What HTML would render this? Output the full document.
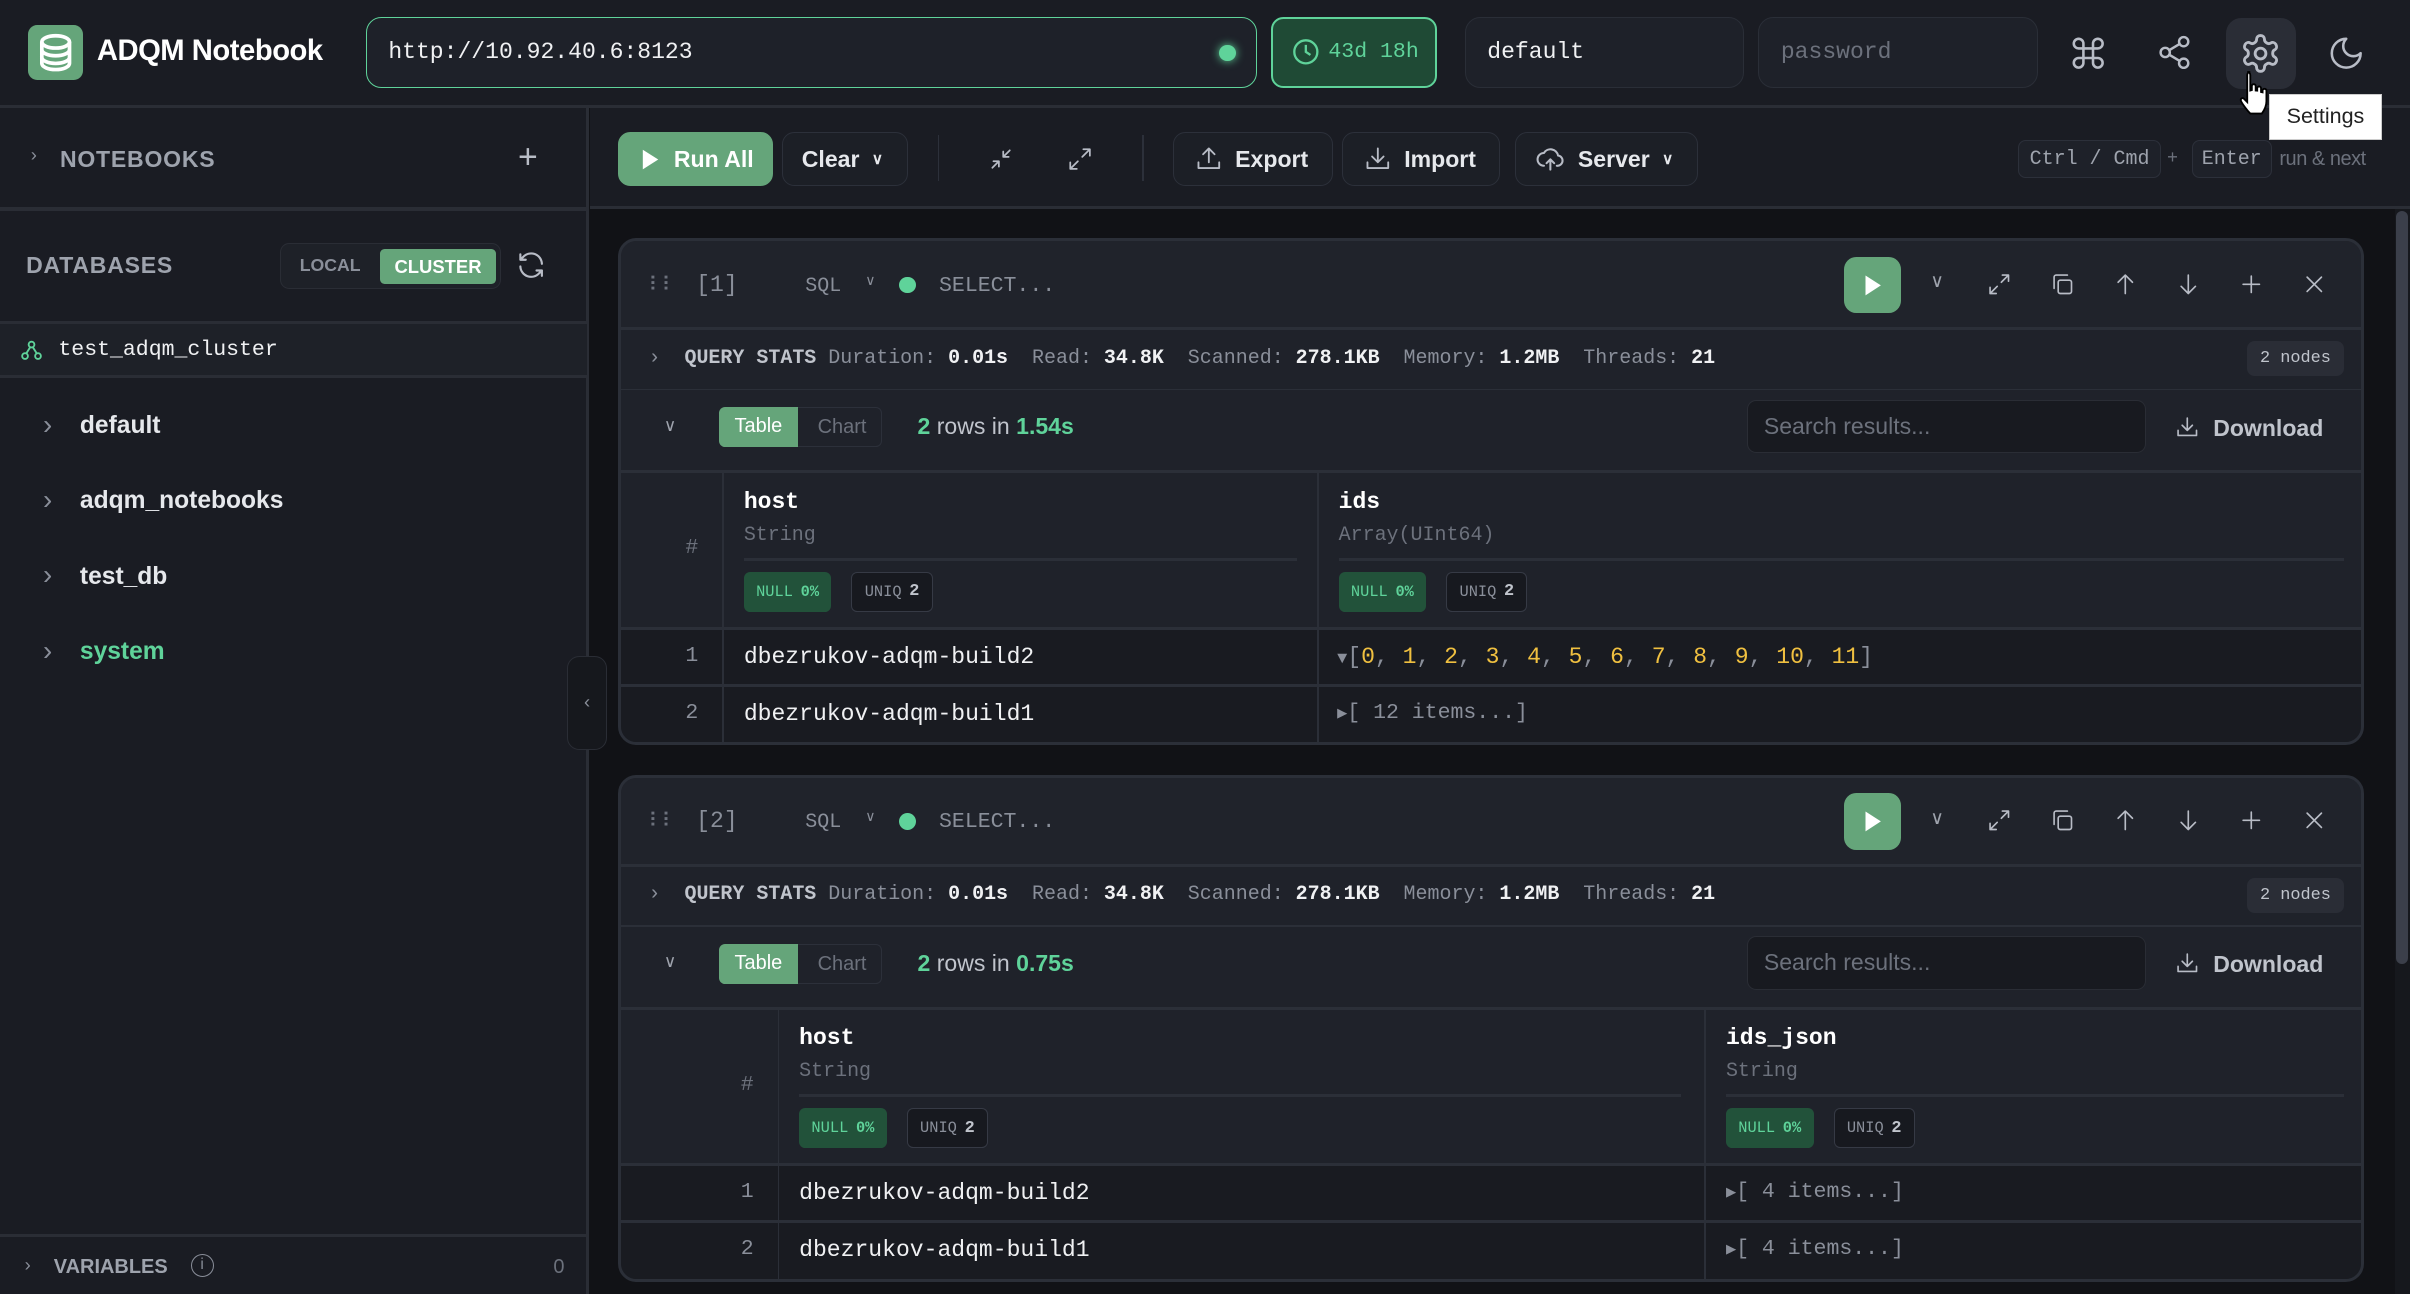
<!DOCTYPE html>
<html><head><meta charset="utf-8">
<style>
*{box-sizing:border-box;margin:0;padding:0}
html,body{width:2410px;height:1294px;overflow:hidden;background:#111216}
#r{zoom:1.537;width:1568px;height:842px;position:relative;font-family:"Liberation Sans",sans-serif;color:#e6e8ec;background:#111216}
.a{position:absolute}
.mono{font-family:"Liberation Mono",monospace}
.btn{position:absolute;height:35px;border:1px solid #2c303a;border-radius:8px;background:#1c1f26;display:flex;align-items:center;gap:8px;padding:0 12px;font-size:15px;font-weight:bold;color:#e6e8ec;white-space:nowrap}
.inp{position:absolute;height:46px;border:1px solid #2a2e37;border-radius:10px;background:#1e2129;font-family:"Liberation Mono",monospace;font-size:15px;display:flex;align-items:center;padding-left:14px}
svg{display:block}
.ic{stroke:#b8bcc6;fill:none;stroke-width:1.6;stroke-linecap:round;stroke-linejoin:round}
.cell{position:absolute;left:402px;width:1136px;background:#1f222a;border:2px solid #2b2f38;border-radius:12px;overflow:hidden}
.hl{position:absolute;left:0;right:0;height:1px;background:#2b2f38}
.vl{position:absolute;width:1px;background:#2b2f38}
.pill{position:absolute;height:26px;border-radius:4px;font-family:"Liberation Mono",monospace;font-size:10px;display:flex;align-items:center;padding:0 8px;gap:5px}
.null{background:#22523a;color:#5fd39a}
.uniq{border:1px solid #363a45;background:#17191f;color:#8a8f9a}
.stats{font-family:"Liberation Mono",monospace;font-size:13px;color:#8a8f9a;white-space:nowrap}
.stats b{color:#f0f1f3}
</style></head><body><div id="r">

<div class="a" style="left:0;top:0;width:1568px;height:70px;background:#1a1c23;border-bottom:2px solid #2a2d35"></div>
<div class="a" style="left:18px;top:16px;width:36px;height:36px;border-radius:6px;background:#65a57a">
<svg width="36" height="36" viewBox="0 0 36 36"><g fill="none" stroke="#fff" stroke-width="2.4"><ellipse cx="18" cy="11" rx="9" ry="4"/><path d="M9 11v14c0 2.2 4 4 9 4s9-1.8 9-4V11M9 16c0 2.2 4 4 9 4s9-1.8 9-4M9 21c0 2.2 4 4 9 4s9-1.8 9-4"/></g></svg></div>
<div class="a" style="left:63px;top:23px;font-size:19px;font-weight:bold;color:#fff;letter-spacing:-0.3px">ADQM Notebook</div>
<div class="inp" style="left:238px;top:11px;width:580px;border-color:#5fd39a;color:#f0f1f3">http://10.92.40.6:8123</div>
<div class="a" style="left:793px;top:29px;width:11px;height:11px;border-radius:50%;background:#5fd39a;box-shadow:0 0 6px #5fd39a"></div>
<div class="a" style="left:827px;top:11px;width:108px;height:46px;border:1.5px solid #5fd39a;border-radius:8px;background:#1f4a35;display:flex;align-items:center;gap:6px;padding-left:12px;font-family:'Liberation Mono',monospace;font-size:14px;color:#5fd39a">
<svg width="18" height="18" viewBox="0 0 18 18"><circle cx="9" cy="9" r="7.5" fill="none" stroke="#5fd39a" stroke-width="1.5"/><path d="M9 4.5V9l3 2" fill="none" stroke="#5fd39a" stroke-width="1.5"/></svg>43d 18h</div>
<div class="inp" style="left:953px;top:11px;width:182px;color:#f0f1f3;background:#1e2129">default</div>
<div class="inp" style="left:1144px;top:11px;width:182px;color:#6c717c">password</div>
<svg class="a" style="left:1346px;top:22px" width="25" height="25" viewBox="0 0 24 24"><path class="ic" stroke-width="1.8" d="M15 6v12a3 3 0 1 0 3-3H6a3 3 0 1 0 3 3V6a3 3 0 1 0-3 3h12a3 3 0 1 0-3-3"/></svg>
<svg class="a" style="left:1403px;top:22px" width="24" height="24" viewBox="0 0 24 24"><g class="ic" stroke-width="1.8"><circle cx="18" cy="5" r="3"/><circle cx="6" cy="12" r="3"/><circle cx="18" cy="19" r="3"/><path d="M8.6 13.5l6.8 4M15.4 6.5l-6.8 4"/></g></svg>
<div class="a" style="left:1448px;top:12px;width:46px;height:46px;border-radius:10px;background:#2a2d36"></div>
<svg class="a" style="left:1457px;top:21px" width="28" height="28" viewBox="0 0 24 24"><g class="ic" stroke="#e6e8ec" stroke-width="1.7"><path d="M12.2 2h-.4a2 2 0 0 0-2 2v.2a2 2 0 0 1-1 1.7l-.4.3a2 2 0 0 1-2 0l-.2-.1a2 2 0 0 0-2.7.7l-.2.4a2 2 0 0 0 .7 2.7l.2.1a2 2 0 0 1 1 1.7v.5a2 2 0 0 1-1 1.7l-.2.1a2 2 0 0 0-.7 2.7l.2.4a2 2 0 0 0 2.7.7l.2-.1a2 2 0 0 1 2 0l.4.3a2 2 0 0 1 1 1.7v.2a2 2 0 0 0 2 2h.4a2 2 0 0 0 2-2v-.2a2 2 0 0 1 1-1.7l.4-.3a2 2 0 0 1 2 0l.2.1a2 2 0 0 0 2.7-.7l.2-.4a2 2 0 0 0-.7-2.7l-.2-.1a2 2 0 0 1-1-1.7v-.5a2 2 0 0 1 1-1.7l.2-.1a2 2 0 0 0 .7-2.7l-.2-.4a2 2 0 0 0-2.7-.7l-.2.1a2 2 0 0 1-2 0l-.4-.3a2 2 0 0 1-1-1.7V4a2 2 0 0 0-2-2z"/><circle cx="12" cy="12" r="3"/></g></svg>
<svg class="a" style="left:1514px;top:22px" width="25" height="25" viewBox="0 0 24 24"><path class="ic" stroke-width="1.8" d="M12 3a6 6 0 0 0 9 9 9 9 0 1 1-9-9z"/></svg>

<div class="a" style="left:0;top:70px;width:383px;height:772px;background:#1a1c23;border-right:2px solid #2a2d35"></div>
<div class="a" style="left:0;top:135px;width:382px;height:2px;background:#2a2d35"></div>
<div class="a" style="left:20px;top:94px;font-size:12px;color:#8a8f9a">&#x203A;</div>
<div class="a" style="left:39px;top:95px;font-size:15px;font-weight:bold;color:#9ea3ad;letter-spacing:.5px">NOTEBOOKS</div>
<div class="a" style="left:337px;top:90px;font-size:22px;color:#b8bcc6">+</div>
<div class="a" style="left:17px;top:164px;font-size:15px;font-weight:bold;color:#9ea3ad;letter-spacing:.5px">DATABASES</div>
<div class="a" style="left:182px;top:158px;width:144px;height:30px;border:1px solid #2a2d35;border-radius:6px;background:#1e2128"></div>
<div class="a" style="left:195px;top:166px;font-size:11.5px;font-weight:bold;color:#8a8f9a">LOCAL</div>
<div class="a" style="left:247px;top:162px;width:76px;height:23px;background:#65a57a;border-radius:3px;font-size:12px;font-weight:bold;color:#fff;text-align:center;line-height:23px">CLUSTER</div>
<svg class="a" style="left:335px;top:162px" width="21" height="21" viewBox="0 0 24 24"><path class="ic" stroke-width="1.8" d="M20 11a8 8 0 0 0-14-5l-2 2M4 4v4h4M4 13a8 8 0 0 0 14 5l2-2M20 20v-4h-4"/></svg>
<div class="a" style="left:0;top:209px;width:382px;height:37px;background:#1e2128;border-top:2px solid #2a2d35;border-bottom:2px solid #2a2d35"></div>
<svg class="a" style="left:13px;top:220px" width="15" height="16" viewBox="0 0 16 16"><g fill="none" stroke="#5fd39a" stroke-width="1.3"><circle cx="8" cy="4" r="2"/><circle cx="3.5" cy="12" r="2"/><circle cx="12.5" cy="12" r="2"/><path d="M7 6l-2.5 4M9 6l2.5 4"/></g></svg>
<div class="a mono" style="left:38px;top:220px;font-size:14px;color:#f0f1f3">test_adqm_cluster</div>
<div class="a" style="left:28px;top:266px;font-size:18px;color:#8a8f9a">&#x203A;</div><div class="a" style="left:52px;top:268px;font-size:16px;font-weight:bold;color:#e6e8ec">default</div>
<div class="a" style="left:28px;top:315px;font-size:18px;color:#8a8f9a">&#x203A;</div><div class="a" style="left:52px;top:317px;font-size:16px;font-weight:bold;color:#e6e8ec">adqm_notebooks</div>
<div class="a" style="left:28px;top:364px;font-size:18px;color:#8a8f9a">&#x203A;</div><div class="a" style="left:52px;top:366px;font-size:16px;font-weight:bold;color:#e6e8ec">test_db</div>
<div class="a" style="left:28px;top:413px;font-size:18px;color:#8a8f9a">&#x203A;</div><div class="a" style="left:52px;top:415px;font-size:16px;font-weight:bold;color:#5fd39a">system</div>
<div class="a" style="left:0;top:803px;width:382px;height:2px;background:#2a2d35"></div>
<div class="a" style="left:16px;top:816px;font-size:12px;color:#8a8f9a">&#x203A;</div>
<div class="a" style="left:35px;top:817px;font-size:13px;font-weight:bold;color:#9ea3ad">VARIABLES</div>
<div class="a" style="left:124px;top:816px;width:15px;height:15px;border:1.3px solid #8a8f9a;border-radius:50%;font-size:10px;color:#8a8f9a;text-align:center;line-height:13px">i</div>
<div class="a" style="left:360px;top:817px;font-size:13px;color:#6c717c">0</div>
<div class="a" style="left:369px;top:427px;width:26px;height:61px;border:1px solid #2a2d35;border-radius:8px;background:#16181d;color:#8a8f9a;font-size:12px;text-align:center;line-height:58px">&#x2039;</div>

<div class="a" style="left:384px;top:70px;width:1184px;height:66px;background:#1a1c23;border-bottom:2px solid #2a2d35"></div>
<div class="btn" style="left:402px;top:86px;width:101px;background:#65a57a;border-color:#65a57a;color:#fff;padding-left:14px;gap:9px"><svg width="13" height="15" viewBox="0 0 14 16"><path d="M2 1l11 7-11 7z" fill="#fff"/></svg>Run All</div>
<div class="btn" style="left:509px;top:86px;width:82px">Clear <span style="font-size:10px">&#x2228;</span></div>
<div class="a" style="left:610px;top:88px;width:1px;height:30px;background:#2c303a"></div>
<svg class="a" style="left:643px;top:95px" width="17" height="17" viewBox="0 0 24 24"><path class="ic" d="M4 20l6-6M10 19v-5H5M20 4l-6 6M14 5v5h5"/></svg>
<svg class="a" style="left:694px;top:95px" width="17" height="17" viewBox="0 0 24 24"><path class="ic" d="M14 10l7-7M15 3h6v6M10 14l-7 7M3 15v6h6"/></svg>
<div class="a" style="left:743px;top:88px;width:1px;height:30px;background:#2c303a"></div>
<div class="btn" style="left:763px;top:86px;width:104px;padding-left:14px"><svg width="18" height="18" viewBox="0 0 24 24"><path class="ic" stroke="#e6e8ec" stroke-width="2" d="M12 15V3M7 8l5-5 5 5M3 15v5h18v-5"/></svg>Export</div>
<div class="btn" style="left:873px;top:86px;width:103px;padding-left:14px"><svg width="18" height="18" viewBox="0 0 24 24"><path class="ic" stroke="#e6e8ec" stroke-width="2" d="M12 3v12M7 10l5 5 5-5M3 15v5h18v-5"/></svg>Import</div>
<div class="btn" style="left:986px;top:86px;width:119px;padding-left:12px"><svg width="20" height="20" viewBox="0 0 24 24"><path class="ic" stroke="#8a8f9a" d="M7 17a5 5 0 0 1 0-10 6 6 0 0 1 11 2 4 4 0 0 1-1 8M12 20v-8M9 15l3-3 3 3"/></svg>Server <span style="font-size:10px">&#x2228;</span></div>
<div class="a mono" style="left:1313px;top:91px;width:93px;height:25px;border:1px solid #2c303a;border-radius:5px;background:#1e2129;font-size:13px;color:#9ea3ad;text-align:center;line-height:23px">Ctrl / Cmd</div>
<div class="a" style="left:1410px;top:95px;font-size:12px;color:#6c717c">+</div>
<div class="a mono" style="left:1426px;top:91px;width:52px;height:25px;border:1px solid #2c303a;border-radius:5px;background:#1e2129;font-size:13px;color:#9ea3ad;text-align:center;line-height:23px">Enter</div>
<div class="a" style="left:1483px;top:96px;font-size:13px;color:#6c717c;white-space:nowrap;letter-spacing:-0.3px">run &amp; next</div>

<div class="a" style="left:1476px;top:61px;width:74px;height:30px;background:#fff;border:1px solid #ccc;font-size:14px;color:#222;text-align:center;line-height:28px">Settings</div>
<svg class="a" style="left:1456px;top:45px" width="24" height="32" viewBox="0 0 24 32"><path d="M6 2c1.5 0 2 1 2 2v10l1-.3V11c0-1.5 2.5-1.5 2.5 0v3l1 .1V12.5c0-1.5 2.5-1.5 2.5 0v2.5l1 .2V14c0-1.5 2.5-1.5 2.5 0v7c0 3-1.5 6-3 8H8c-2-2-5-6-6-8-.7-1.5.6-2.8 2-1.5l2 2V4c0-1 .5-2 2-2z" fill="#fff" stroke="#000" stroke-width="1.2"/></svg>

<div class="a" style="left:1558px;top:136px;width:10px;height:706px;background:#16181d"></div>
<div class="a" style="left:1559px;top:137px;width:8px;height:490px;background:#3b3f4a;border-radius:4px"></div>

<div class="cell" style="top:155px;height:330px">
 <div class="a" style="left:0;top:0;width:1136px;height:56px;background:#20232b"></div>
 <div class="a" style="left:18px;top:20px;font-size:13px;color:#6c717c;letter-spacing:-1px">&#x2807;&#x2807;</div>
 <div class="a mono" style="left:49px;top:20px;font-size:15px;color:#8a8f9a">[1]</div>
 <div class="a mono" style="left:120px;top:21px;font-size:13px;color:#8a8f9a">SQL</div>
 <div class="a" style="left:159px;top:20px;font-size:9px;color:#8a8f9a">&#x2228;</div>
 <div class="a" style="left:181px;top:23px;width:11px;height:11px;border-radius:50%;background:#5fd39a"></div>
 <div class="a mono" style="left:207px;top:21px;font-size:14px;color:#8a8f9a">SELECT...</div>
 <div class="a" style="left:796px;top:10px;width:37px;height:37px;border-radius:8px;background:#65a57a"><svg width="37" height="37" viewBox="0 0 37 37"><path d="M14 12l10 6.5-10 6.5z" fill="#fff"/></svg></div>
 <div class="a" style="left:852px;top:19px;font-size:12px;color:#9ea3ad">&#x2228;</div>
 <svg class="a" style="left:889px;top:20px" width="16" height="16" viewBox="0 0 24 24"><path class="ic" d="M14 10l7-7M15 3h6v6M10 14l-7 7M3 15v6h6"/></svg>
 <svg class="a" style="left:930px;top:20px" width="16" height="16" viewBox="0 0 24 24"><g class="ic"><rect x="8" y="8" width="13" height="13" rx="2"/><path d="M4 16V5a2 2 0 0 1 2-2h11"/></g></svg>
 <svg class="a" style="left:971px;top:20px" width="16" height="16" viewBox="0 0 24 24"><path class="ic" d="M12 21V3M5 10l7-7 7 7"/></svg>
 <svg class="a" style="left:1012px;top:20px" width="16" height="16" viewBox="0 0 24 24"><path class="ic" d="M12 3v18M5 14l7 7 7-7"/></svg>
 <svg class="a" style="left:1053px;top:20px" width="16" height="16" viewBox="0 0 24 24"><path class="ic" d="M12 4v16M4 12h16"/></svg>
 <svg class="a" style="left:1094px;top:20px" width="16" height="16" viewBox="0 0 24 24"><path class="ic" d="M5 5l14 14M19 5L5 19"/></svg>
 <div class="hl" style="top:56px;height:2px"></div>
 <div class="a stats" style="left:18px;top:68px">&#x203A;&nbsp; <span style="color:#c0c4cc;font-weight:bold">QUERY STATS</span> Duration: <b>0.01s</b>&nbsp; Read: <b>34.8K</b>&nbsp; Scanned: <b>278.1KB</b>&nbsp; Memory: <b>1.2MB</b>&nbsp; Threads: <b>21</b></div>
 <div class="a mono" style="left:1058px;top:65px;width:63px;height:23px;background:#2a2d36;border-radius:5px;font-size:11px;color:#c0c4cc;text-align:center;line-height:23px">2 nodes</div>
 <div class="hl" style="top:96px"></div>
 <div class="a" style="left:28px;top:113px;font-size:11px;color:#9ea3ad">&#x2228;</div>
 <div class="a" style="left:64px;top:108px;width:106px;height:26px;border:1px solid #2c303a;border-radius:4px"></div>
 <div class="a" style="left:64px;top:108px;width:51px;height:26px;background:#65a57a;border-radius:4px 0 0 4px;font-size:13px;color:#fff;text-align:center;line-height:26px">Table</div>
 <div class="a" style="left:128px;top:114px;font-size:13px;color:#6c717c">Chart</div>
 <div class="a" style="left:193px;top:112px;font-size:15px;color:#c0c4cc"><b style="color:#5fd39a">2</b> rows in <b style="color:#5fd39a">1.54s</b></div>
 <div class="a" style="left:733px;top:103px;width:259px;height:35px;border:1px solid #2a2d35;border-radius:6px;background:#181a20;font-size:15px;color:#6c717c;padding-left:10px;line-height:33px">Search results...</div>
 <svg class="a" style="left:1011px;top:113px" width="16" height="16" viewBox="0 0 24 24"><path class="ic" stroke-width="2" d="M12 3v12M7 10l5 5 5-5M3 15v5h18v-5"/></svg>
 <div class="a" style="left:1036px;top:113px;font-size:15px;font-weight:bold;color:#c0c4cc">Download</div>
 <div class="hl" style="top:149px;height:2px"></div>
 <div class="vl" style="left:66px;top:150px;height:180px"></div>
 <div class="vl" style="left:453px;top:150px;height:180px"></div>
 <div class="a mono" style="left:42px;top:192px;font-size:14px;color:#6c717c">#</div>
 <div class="a mono" style="left:80px;top:161px;font-size:15px;font-weight:bold;color:#fff">host</div>
 <div class="a mono" style="left:80px;top:183px;font-size:13px;color:#6c717c">String</div>
 <div class="a" style="left:80px;top:206px;width:360px;height:2px;background:#2b2f38"></div>
 <div class="pill null" style="left:80px;top:215px">NULL <b>0%</b></div>
 <div class="pill uniq" style="left:150px;top:215px">UNIQ <b style="color:#c0c4cc;font-size:11px">2</b></div>
 <div class="a mono" style="left:467px;top:161px;font-size:15px;font-weight:bold;color:#fff">ids</div>
 <div class="a mono" style="left:467px;top:183px;font-size:13px;color:#6c717c">Array(UInt64)</div>
 <div class="a" style="left:467px;top:206px;width:654px;height:2px;background:#2b2f38"></div>
 <div class="pill null" style="left:467px;top:215px">NULL <b>0%</b></div>
 <div class="pill uniq" style="left:537px;top:215px">UNIQ <b style="color:#c0c4cc;font-size:11px">2</b></div>
 <div class="a" style="left:0;top:251px;width:1136px;height:79px;background:#191b21"></div>
 <div class="hl" style="top:251px;height:2px"></div>
 <div class="hl" style="top:288px;height:2px"></div>
 <div class="vl" style="left:66px;top:251px;height:80px"></div><div class="vl" style="left:453px;top:251px;height:80px"></div>
 <div class="a mono" style="left:42px;top:262px;font-size:14px;color:#8a8f9a">1</div>
 <div class="a mono" style="left:80px;top:262px;font-size:15px;color:#f0f1f3">dbezrukov-adqm-build2</div>
 <div class="a mono" style="left:466px;top:262px;font-size:15px;color:#8a8f9a;white-space:nowrap"><span style="font-size:11px">&#x25BC;</span>[<span style="color:#f0c040">0</span>, <span style="color:#f0c040">1</span>, <span style="color:#f0c040">2</span>, <span style="color:#f0c040">3</span>, <span style="color:#f0c040">4</span>, <span style="color:#f0c040">5</span>, <span style="color:#f0c040">6</span>, <span style="color:#f0c040">7</span>, <span style="color:#f0c040">8</span>, <span style="color:#f0c040">9</span>, <span style="color:#f0c040">10</span>, <span style="color:#f0c040">11</span>]</div>
 <div class="a mono" style="left:42px;top:299px;font-size:14px;color:#8a8f9a">2</div>
 <div class="a mono" style="left:80px;top:299px;font-size:15px;color:#f0f1f3">dbezrukov-adqm-build1</div>
 <div class="a mono" style="left:466px;top:299px;font-size:14px;color:#8a8f9a"><span style="font-size:11px">&#x25B6;</span>[ 12 items...]</div>
</div>

<div class="cell" style="top:504px;height:330px">
 <div class="a" style="left:0;top:0;width:1136px;height:56px;background:#20232b"></div>
 <div class="a" style="left:18px;top:20px;font-size:13px;color:#6c717c;letter-spacing:-1px">&#x2807;&#x2807;</div>
 <div class="a mono" style="left:49px;top:20px;font-size:15px;color:#8a8f9a">[2]</div>
 <div class="a mono" style="left:120px;top:21px;font-size:13px;color:#8a8f9a">SQL</div>
 <div class="a" style="left:159px;top:20px;font-size:9px;color:#8a8f9a">&#x2228;</div>
 <div class="a" style="left:181px;top:23px;width:11px;height:11px;border-radius:50%;background:#5fd39a"></div>
 <div class="a mono" style="left:207px;top:21px;font-size:14px;color:#8a8f9a">SELECT...</div>
 <div class="a" style="left:796px;top:10px;width:37px;height:37px;border-radius:8px;background:#65a57a"><svg width="37" height="37" viewBox="0 0 37 37"><path d="M14 12l10 6.5-10 6.5z" fill="#fff"/></svg></div>
 <div class="a" style="left:852px;top:19px;font-size:12px;color:#9ea3ad">&#x2228;</div>
 <svg class="a" style="left:889px;top:20px" width="16" height="16" viewBox="0 0 24 24"><path class="ic" d="M14 10l7-7M15 3h6v6M10 14l-7 7M3 15v6h6"/></svg>
 <svg class="a" style="left:930px;top:20px" width="16" height="16" viewBox="0 0 24 24"><g class="ic"><rect x="8" y="8" width="13" height="13" rx="2"/><path d="M4 16V5a2 2 0 0 1 2-2h11"/></g></svg>
 <svg class="a" style="left:971px;top:20px" width="16" height="16" viewBox="0 0 24 24"><path class="ic" d="M12 21V3M5 10l7-7 7 7"/></svg>
 <svg class="a" style="left:1012px;top:20px" width="16" height="16" viewBox="0 0 24 24"><path class="ic" d="M12 3v18M5 14l7 7 7-7"/></svg>
 <svg class="a" style="left:1053px;top:20px" width="16" height="16" viewBox="0 0 24 24"><path class="ic" d="M12 4v16M4 12h16"/></svg>
 <svg class="a" style="left:1094px;top:20px" width="16" height="16" viewBox="0 0 24 24"><path class="ic" d="M5 5l14 14M19 5L5 19"/></svg>
 <div class="hl" style="top:56px;height:2px"></div>
 <div class="a stats" style="left:18px;top:68px">&#x203A;&nbsp; <span style="color:#c0c4cc;font-weight:bold">QUERY STATS</span> Duration: <b>0.01s</b>&nbsp; Read: <b>34.8K</b>&nbsp; Scanned: <b>278.1KB</b>&nbsp; Memory: <b>1.2MB</b>&nbsp; Threads: <b>21</b></div>
 <div class="a mono" style="left:1058px;top:65px;width:63px;height:23px;background:#2a2d36;border-radius:5px;font-size:11px;color:#c0c4cc;text-align:center;line-height:23px">2 nodes</div>
 <div class="hl" style="top:96px"></div>
 <div class="a" style="left:28px;top:113px;font-size:11px;color:#9ea3ad">&#x2228;</div>
 <div class="a" style="left:64px;top:108px;width:106px;height:26px;border:1px solid #2c303a;border-radius:4px"></div>
 <div class="a" style="left:64px;top:108px;width:51px;height:26px;background:#65a57a;border-radius:4px 0 0 4px;font-size:13px;color:#fff;text-align:center;line-height:26px">Table</div>
 <div class="a" style="left:128px;top:114px;font-size:13px;color:#6c717c">Chart</div>
 <div class="a" style="left:193px;top:112px;font-size:15px;color:#c0c4cc"><b style="color:#5fd39a">2</b> rows in <b style="color:#5fd39a">0.75s</b></div>
 <div class="a" style="left:733px;top:103px;width:259px;height:35px;border:1px solid #2a2d35;border-radius:6px;background:#181a20;font-size:15px;color:#6c717c;padding-left:10px;line-height:33px">Search results...</div>
 <svg class="a" style="left:1011px;top:113px" width="16" height="16" viewBox="0 0 24 24"><path class="ic" stroke-width="2" d="M12 3v12M7 10l5 5 5-5M3 15v5h18v-5"/></svg>
 <div class="a" style="left:1036px;top:113px;font-size:15px;font-weight:bold;color:#c0c4cc">Download</div>
 <div class="hl" style="top:149px;height:2px"></div>
 <div class="vl" style="left:102px;top:150px;height:180px"></div>
 <div class="vl" style="left:705px;top:150px;height:180px"></div>
 <div class="a mono" style="left:78px;top:192px;font-size:14px;color:#6c717c">#</div>
 <div class="a mono" style="left:116px;top:161px;font-size:15px;font-weight:bold;color:#fff">host</div>
 <div class="a mono" style="left:116px;top:183px;font-size:13px;color:#6c717c">String</div>
 <div class="a" style="left:116px;top:206px;width:574px;height:2px;background:#2b2f38"></div>
 <div class="pill null" style="left:116px;top:215px">NULL <b>0%</b></div>
 <div class="pill uniq" style="left:186px;top:215px">UNIQ <b style="color:#c0c4cc;font-size:11px">2</b></div>
 <div class="a mono" style="left:719px;top:161px;font-size:15px;font-weight:bold;color:#fff">ids_json</div>
 <div class="a mono" style="left:719px;top:183px;font-size:13px;color:#6c717c">String</div>
 <div class="a" style="left:719px;top:206px;width:402px;height:2px;background:#2b2f38"></div>
 <div class="pill null" style="left:719px;top:215px">NULL <b>0%</b></div>
 <div class="pill uniq" style="left:789px;top:215px">UNIQ <b style="color:#c0c4cc;font-size:11px">2</b></div>
 <div class="a" style="left:0;top:251px;width:1136px;height:79px;background:#191b21"></div>
 <div class="hl" style="top:251px;height:2px"></div>
 <div class="hl" style="top:288px;height:2px"></div>
 <div class="vl" style="left:102px;top:251px;height:80px"></div><div class="vl" style="left:705px;top:251px;height:80px"></div>
 <div class="a mono" style="left:78px;top:262px;font-size:14px;color:#8a8f9a">1</div>
 <div class="a mono" style="left:116px;top:262px;font-size:15px;color:#f0f1f3">dbezrukov-adqm-build2</div>
 <div class="a mono" style="left:719px;top:262px;font-size:14px;color:#8a8f9a"><span style="font-size:11px">&#x25B6;</span>[ 4 items...]</div>
 <div class="a mono" style="left:78px;top:299px;font-size:14px;color:#8a8f9a">2</div>
 <div class="a mono" style="left:116px;top:299px;font-size:15px;color:#f0f1f3">dbezrukov-adqm-build1</div>
 <div class="a mono" style="left:719px;top:299px;font-size:14px;color:#8a8f9a"><span style="font-size:11px">&#x25B6;</span>[ 4 items...]</div>
</div>

</div></body></html>
